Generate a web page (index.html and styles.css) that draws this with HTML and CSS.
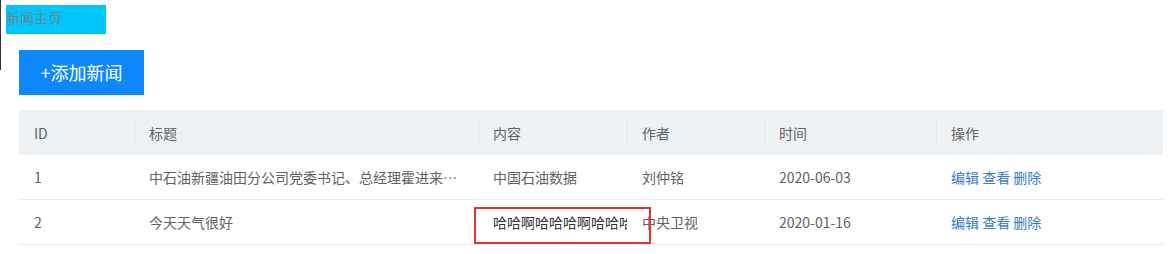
FILE: index.html
```html
<!DOCTYPE html>
<html lang="zh">
<head>
<meta charset="utf-8">
<title>新闻主页</title>
<link rel="stylesheet" href="styles.css">
</head>
<body>
<div class="edge"></div>
<a class="home" href="#">新闻主页</a>
<main class="main">
  <button class="add">+添加新闻</button>
  <table class="grid">
    <colgroup>
      <col style="width:115px"><col style="width:344px"><col style="width:149px"><col style="width:137px"><col style="width:172px"><col style="width:227px">
    </colgroup>
    <thead>
      <tr><th>ID</th><th>标题</th><th>内容</th><th>作者</th><th>时间</th><th>操作</th></tr>
    </thead>
    <tbody>
      <tr>
        <td>1</td>
        <td><div class="cell">中石油新疆油田分公司党委书记、总经理霍进来新疆油田分公司调研</div></td>
        <td><div class="cell">中国石油数据</div></td>
        <td>刘仲铭</td>
        <td>2020-06-03</td>
        <td class="ops"><a href="#">编辑</a> <a href="#">查看</a> <a href="#">删除</a></td>
      </tr>
      <tr>
        <td>2</td>
        <td><div class="cell">今天天气很好</div></td>
        <td><div class="cell clip">哈哈啊哈哈哈啊哈哈哈哈哈啊</div></td>
        <td>中央卫视</td>
        <td>2020-01-16</td>
        <td class="ops"><a href="#">编辑</a> <a href="#">查看</a> <a href="#">删除</a></td>
      </tr>
    </tbody>
  </table>
</main>
<div class="mark"></div>
</body>
</html>
```
FILE: styles.css
```css
html, body {
  margin: 0;
  padding: 0;
  background: #fff;
}
body {
  font-family: "Noto Sans CJK SC", "Noto Sans", sans-serif;
  font-size: 14px;
  color: #606266;
  position: relative;
  min-height: 254px;
}
.edge {
  position: absolute;
  left: 0;
  top: 0;
  width: 1px;
  height: 70px;
  background: #333;
}
.home {
  display: block;
  width: 100px;
  height: 29px;
  margin: 5px 0 0 6px;
  background: #00c6fc;
  color: #6a8593;
  text-decoration: none;
  font-size: 14px;
  line-height: 24px;
}
.main {
  padding: 16px 10px 0 19px;
}
.add {
  display: block;
  width: 125px;
  height: 45px;
  border: none;
  margin: 0;
  padding: 0;
  background: #0f88fb;
  color: #fff;
  font-family: "Noto Sans CJK SC", sans-serif;
  font-size: 18px;
  line-height: 45px;
  cursor: pointer;
}
.grid {
  margin-top: 15px;
  width: 1144px;
  border-collapse: collapse;
  table-layout: fixed;
}
.grid th {
  height: 45px;
  padding: 0 15px;
  background: #eff2f5;
  font-weight: normal;
  text-align: left;
  color: #606266;
  position: relative;
}
.grid th + th::before {
  content: "";
  position: absolute;
  left: 0;
  top: 10px;
  bottom: 10px;
  width: 1px;
  background: #e3e6eb;
}
.grid td {
  height: 44px;
  padding: 0 15px;
  border-bottom: 1px solid #ebeef5;
  color: #606266;
  white-space: nowrap;
}
.cell {
  overflow: hidden;
  text-overflow: ellipsis;
  white-space: nowrap;
}
.cell.clip {
  text-overflow: clip;
  font-size: 14px;
  color: #333;
  margin-right: -15px;
}
.ops a {
  color: #3a7dbf;
  text-decoration: none;
}
.mark {
  position: absolute;
  left: 474px;
  top: 207px;
  width: 173px;
  height: 33px;
  border: 2px solid #d8363c;
}
```
